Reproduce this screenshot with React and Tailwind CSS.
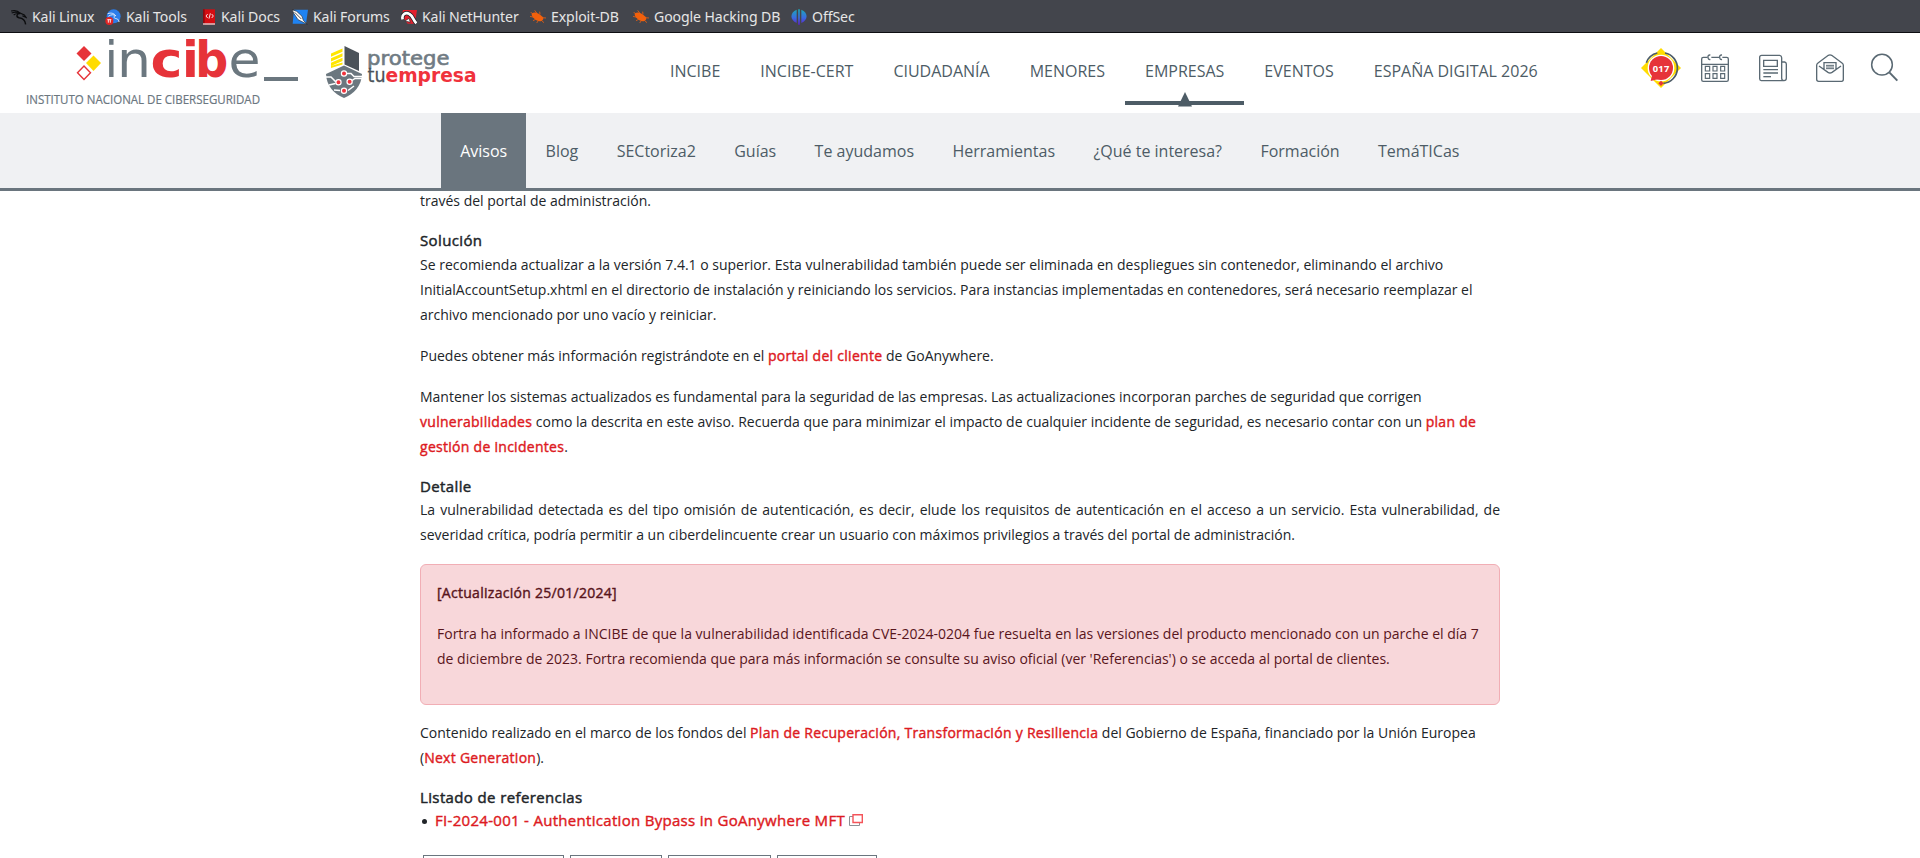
import React from "react";

const DragonIcon = () => (
  <svg width="16" height="16" viewBox="0 0 48 48" fill="none" stroke="#0b0c0e" strokeWidth="3.4">
    <path d="M0 6 C12 3 22 6 28 13 M2 12 C12 8 20 10 26 14 M8 18 C14 13 22 13 28 14" />
    <path d="M26 13 C16 15 15 24 24 26 C34 27 42 30 44 46" strokeWidth="4.4" />
    <path d="M27 12 L40 18 L45 25 L34 20" />
  </svg>
);
const ToolsIcon = () => (
  <svg width="16" height="16" viewBox="0 0 48 48">
    <circle cx="26" cy="22" r="21" fill="#2b7de9" />
    <path d="M8 14 C20 10 28 14 32 20 M10 22 C18 16 26 16 32 20 C24 22 26 28 34 29 C40 30 42 35 42 39" fill="none" stroke="#dcebff" strokeWidth="3" />
    <circle cx="13" cy="36" r="12" fill="#e02424" />
    <path d="M7 32 H19 M10 32 V41 M16 32 V41" stroke="#fff" strokeWidth="2.6" />
  </svg>
);
const DocsIcon = () => (
  <svg width="14" height="16" viewBox="0 0 42 48">
    <path d="M3 1 H39 V47 H3 Z" fill="#d40d12" />
    <path d="M3 1 H8 V47 H3 Z" fill="#8d0a0e" />
    <path d="M3 43 H39 V47 H3 Z" fill="#ddd" />
    <path d="M17 15 L12 21 L17 27 M29 15 L34 21 L29 27 M25 13 L21 29" fill="none" stroke="#fff" strokeWidth="2.6" />
  </svg>
);
const ForumsIcon = () => (
  <svg width="16" height="16" viewBox="0 0 48 48">
    <path d="M6 2 H48 L42 44 H2 Z" fill="#1f83f2" />
    <path d="M0 2 L14 7 L30 22 L34 34 L46 46 L30 38 L18 32 L6 14 Z" fill="#fff" stroke="#22262b" strokeWidth="2" />
    <path d="M8 10 L28 30" stroke="#22262b" strokeWidth="2.4" />
  </svg>
);
const NetHunterIcon = () => (
  <svg width="16" height="16" viewBox="0 0 48 48">
    <path d="M6 3 H48 L42 44 H20 L2 20 Z" fill="#e3202d" />
    <path d="M5 31 C1 17 14 8 25 15 C36 21 36 32 46 43" fill="none" stroke="#22262b" strokeWidth="13" />
    <path d="M5 31 C1 17 14 8 25 15 C36 21 36 32 46 43" fill="none" stroke="#fff" strokeWidth="8" />
    <path d="M12 36 L24 28 L28 40 Z" fill="#fff" stroke="#22262b" strokeWidth="2" />
  </svg>
);
const BugIcon = () => (
  <svg width="16" height="16" viewBox="0 0 48 48">
    <path d="M6 13 C14 7 26 12 34 20 C40 24 42 29 38 33 C32 40 20 36 13 29 C7 24 3 18 6 13 Z" fill="#f2600c" />
    <path d="M0 22 L12 25 M9 35 L17 31 M20 42 L25 35 M14 4 L20 12 M29 8 L30 16 M36 26 L48 27 M34 34 L42 41 M2 9 L8 15" stroke="#f2600c" strokeWidth="2.4" />
  </svg>
);
const OffSecIcon = () => (
  <svg width="16" height="16" viewBox="0 0 48 48">
    <defs>
      <linearGradient id="offsec" x1="0" y1="0" x2="0" y2="1">
        <stop offset="0" stopColor="#1ba8b8" />
        <stop offset="0.55" stopColor="#3a6be0" />
        <stop offset="1" stopColor="#5b22c8" />
      </linearGradient>
    </defs>
    <path d="M17 2 V42 C-4 34 -4 10 17 2 Z M31 2 V42 C52 34 52 10 31 2 Z M21.500 1 H26.500 V47 H21.500 Z" fill="url(#offsec)" />
  </svg>
);

const bookmarks = [
  { label: "Kali Linux", icon: DragonIcon, width: "w-[94px]" },
  { label: "Kali Tools", icon: ToolsIcon, width: "w-[97px]" },
  { label: "Kali Docs", icon: DocsIcon, width: "w-[90px]" },
  { label: "Kali Forums", icon: ForumsIcon, width: "w-[109px]" },
  { label: "Kali NetHunter", icon: NetHunterIcon, width: "w-[129px]" },
  { label: "Exploit-DB", icon: BugIcon, width: "w-[103px]" },
  { label: "Google Hacking DB", icon: BugIcon, width: "w-[158px]" },
  { label: "OffSec", icon: OffSecIcon, width: "w-[80px]" },
];

const mainNav = ["INCIBE", "INCIBE-CERT", "CIUDADANÍA", "MENORES", "EMPRESAS", "EVENTOS", "ESPAÑA DIGITAL 2026"];
const subNav = ["Avisos", "Blog", "SECtoriza2", "Guías", "Te ayudamos", "Herramientas", "¿Qué te interesa?", "Formación", "TemáTICas"];

function BookmarksBar() {
  return (
    <div className="flex h-[33px] shrink-0 items-center border-b border-[#0d0e11] bg-[#43454c] pl-[11px] pt-[2px] font-['Noto_Sans','Open_Sans',sans-serif] text-[14.1px] tracking-[-0.1px] text-[#e6e6e6]">
      {bookmarks.map(({ label, icon: Icon, width }) => (
        <div key={label} className={`flex shrink-0 items-center gap-[5px] whitespace-nowrap ${width}`}>
          <Icon />
          <span className="leading-none">{label}</span>
        </div>
      ))}
    </div>
  );
}

function IncibeLogo() {
  return (
    <svg width="310" height="80" viewBox="0 33 310 80" className="shrink-0">
      <path d="M84 46 L91.500 53.500 L84 61 L76.500 53.500 Z" fill="#e63339" />
      <path d="M93.500 55.500 L101 63 L93.500 71 L86 63 Z" fill="#ffdc00" />
      <path d="M84 66 L90.500 72.700 L84 79.400 L77.500 72.700 Z" fill="#fff" stroke="#e63339" strokeWidth="1.400" />
      <g fontFamily="DejaVu Sans" fontSize="49" fill="#6b777f">
        <text x="104.500" y="77">i</text>
        <text x="117" y="77" textLength="34" lengthAdjust="spacingAndGlyphs">n</text>
        <g fill="#e63339" fontWeight="700">
          <text x="150.500" y="77" textLength="32" lengthAdjust="spacingAndGlyphs">c</text>
          <text x="182" y="77">i</text>
          <text x="195.300" y="77" textLength="33" lengthAdjust="spacingAndGlyphs">b</text>
        </g>
        <text x="228.500" y="77" textLength="32" lengthAdjust="spacingAndGlyphs">e</text>
      </g>
      <path d="M264 77 H298 V81 H264 Z" fill="#6b777f" />
      <text x="26" y="104" fontFamily="Open Sans" fontSize="12.800" fill="#6b777f" stroke="#6b777f" strokeWidth="0.200" textLength="234" lengthAdjust="spacingAndGlyphs">
        INSTITUTO NACIONAL DE CIBERSEGURIDAD
      </text>
    </svg>
  );
}

function ProtegeLogo() {
  return (
    <svg width="190" height="80" viewBox="310 33 190 80" className="shrink-0">
      <path d="M331 53.500 L342.500 48.500 V51.800 L331 56.800 Z M331 58.200 L342.500 53.200 V56.500 L331 61.500 Z M331 62.800 L342.500 57.800 V61 L331 66 Z M331 66 L342.500 62.500 V64.500 L331 68 Z" fill="#ffe600" />
      <path d="M344.500 46 L359 53 V71 L344.500 64.500 Z" fill="#4b5259" />
      <path d="M344 65.500 L362 74 C361.500 86 354 94 344 98 C334 94 326.500 86 326 74 Z" fill="#6b777f" />
      <g stroke="#fff" strokeWidth="1.500" fill="none">
        <path d="M346.500 73.500 H351 L354 76.500 H362 M352 80.500 L355 78.500 H362 M336 82 L331 77 H326 M335.500 83.500 L329 85 M340 90.500 L334 90 M348 90.500 L354 86" />
      </g>
      <g fill="#f0323c" stroke="#fff" strokeWidth="1.200">
        <circle cx="344" cy="73.500" r="2.600" />
        <circle cx="338.500" cy="82.300" r="2.600" />
        <circle cx="349.600" cy="81.700" r="2.600" />
        <circle cx="344" cy="90.700" r="2.600" />
      </g>
      <text x="367" y="64.700" fontFamily="DejaVu Sans" fontSize="20" fill="#707b83" stroke="#707b83" strokeWidth="0.600" textLength="82.500" lengthAdjust="spacingAndGlyphs">protege</text>
      <text x="367.500" y="82.300" fontFamily="DejaVu Sans" fontSize="19.500" fill="#4b5259" stroke="#4b5259" strokeWidth="0.300" textLength="18" lengthAdjust="spacingAndGlyphs">tu</text>
      <text x="385.500" y="82.300" fontFamily="DejaVu Sans" fontWeight="700" fontSize="19" fill="#f0323c" textLength="91" lengthAdjust="spacingAndGlyphs">empresa</text>
    </svg>
  );
}

function HeaderIcons() {
  return (
    <div className="ml-auto mr-5 flex shrink-0 items-center pb-[10px]">
      <svg width="42" height="42" viewBox="60 51 126 126">
        <path d="M123 54 L183 114 L123 174 L63 114 Z" fill="#ffdc00" />
        <path d="M79 98 A46 46 0 0 1 112 69" fill="none" stroke="#4d5c66" strokeWidth="5" />
        <path d="M135 69 A46 46 0 0 1 130 160" fill="none" stroke="#4d5c66" strokeWidth="5" />
        <circle cx="123" cy="114" r="40" fill="#fff" />
        <path d="M92 153 L97 132 L116 147 Z" fill="#e63339" />
        <circle cx="123" cy="114" r="36" fill="#e63339" />
        <path d="M123 152 L131 160 L123 168 L115 160 Z" fill="#e63339" />
        <text x="98" y="125" textLength="50" fontFamily="Open Sans" fontWeight="700" fontSize="28" fill="#fff">017</text>
      </svg>
      <svg width="30" height="30" viewBox="240 69 90 90" className="ml-[18px]" fill="none" stroke="#5a6973" strokeWidth="4">
        <path d="M263 82 H250 Q245 82 245 87 V149 Q245 154 250 154 H320 Q325 154 325 149 V87 Q325 82 320 82 H307 M274 82 H297 M245 103 H325" />
        <path d="M271 75 Q263 74 264 82 Q265 90 271 88 M306 75 Q298 74 299 82 Q300 90 306 88" />
        <path d="M256 109 H269 V123 H256 Z M279 109 H291 V123 H279 Z M302 109 H314 V123 H302 Z M256 131 H269 V145 H256 Z M279 131 H291 V145 H279 Z M302 131 H314 V145 H302 Z" strokeWidth="3.500" />
      </svg>
      <svg width="30" height="30" viewBox="414 69 90 90" className="ml-[28px]" fill="none" stroke="#5a6973" strokeWidth="4">
        <path d="M485 96 H494 Q499 97 499 102 V145 Q499 152 492 152 H424 Q419 151 419 146 V82 Q419 76 425 76 H479 Q485 77 485 83 V145 Q485 152 492 152" />
        <path d="M431 91 H472 V109 H431 Z M430 119 H474 M430 129 H474" />
        <path d="M430 140 H453" />
      </svg>
      <svg width="30" height="30" viewBox="585 69 90 90" className="ml-[27px]" fill="none" stroke="#5a6973" strokeWidth="4">
        <path d="M590 106 V148 Q590 154 596 154 H665 Q670 154 670 148 V106 Q670 102 666 99 L635 76 Q630 73 625 76 L594 99 Q590 102 590 106 Z" />
        <path d="M597 108 L624 127 Q630 131 636 127 L663 108 M612 117 V98 H648 V117" />
        <path d="M618 106 H642 M618 111 H642 M618 116 H642" strokeWidth="3" />
      </svg>
      <svg width="30" height="30" viewBox="750 69 90 90" className="ml-[25px]" fill="none" stroke="#5a6973" strokeWidth="4.500">
        <circle cx="786" cy="104" r="31" />
        <path d="M808 127 L832 152" strokeWidth="6" />
      </svg>
    </div>
  );
}

function Header() {
  return (
    <header className="flex h-20 shrink-0 items-center bg-white">
      <IncibeLogo />
      <ProtegeLogo />
      <nav className="ml-[150px] flex h-full shrink-0">
        {mainNav.map((item) => (
          <a key={item} className="relative flex h-[76px] items-center whitespace-nowrap px-5 text-[16px] text-[#4d5c66]">
            {item}
            {item === "EMPRESAS" && (
              <span className="absolute inset-x-0 top-[59px] flex h-[15px] justify-center">
                <span className="absolute inset-x-0 top-[9px] h-1 bg-[#4d5c66]" />
                <svg width="14" height="15" viewBox="0 0 14 15" className="relative">
                  <path d="M7 0 L14 14.500 H0 Z" fill="#4d5c66" />
                </svg>
              </span>
            )}
          </a>
        ))}
      </nav>
      <HeaderIcons />
    </header>
  );
}

function SubNav() {
  return (
    <nav className="flex h-[78px] shrink-0 border-b-[3px] border-[#6a757e] bg-[#f0f1f3] pl-[441px]">
      {subNav.map((item, i) => (
        <a
          key={item}
          className={`flex items-center whitespace-nowrap px-[19.2px] text-[16px] ${i === 0 ? "bg-[#6a757e] text-white" : "text-[#4d5c66]"}`}
        >
          {item}
        </a>
      ))}
    </nav>
  );
}

const A = ({ children }) => <a className="tracking-[0.02em] text-[#dd1a22] [-webkit-text-stroke:0.4px_#dd1a22]">{children}</a>;
const P = ({ children, className = "" }) => <p className={`mb-4 ${className}`}>{children}</p>;
const H = ({ children }) => (
  <h3 className="text-[15px] leading-[22.5px] tracking-[0.025em] [-webkit-text-stroke:0.45px_#212529]">{children}</h3>
);

function ExternalIcon() {
  return (
    <svg width="14" height="12" viewBox="0 0 14 12" className="ml-1 inline-block align-baseline" fill="none">
      <path d="M4 2.500 H0.500 V11.500 H10.500 V9" stroke="#8c9095" />
      <path d="M4 0.800 H13.300 V8.500 H4 Z" stroke="#f4545a" strokeWidth="1.400" />
    </svg>
  );
}

export default function App() {
  return (
    <div className="flex h-[858px] w-[1920px] flex-col overflow-hidden bg-white font-['Open_Sans',sans-serif]">
      <BookmarksBar />
      <Header />
      <SubNav />
      <main className="ml-[420px] w-[1080px] shrink-0 text-[14px] leading-[25px] text-[#212529]">
        <div className="-mt-[3px]">
          <P>través del portal de administración.</P>
          <H>Solución</H>
          <P>
            Se recomienda actualizar a la versión 7.4.1 o superior. Esta vulnerabilidad también puede ser eliminada en despliegues sin contenedor, eliminando el archivo InitialAccountSetup.xhtml en el directorio de instalación y reiniciando los servicios. Para instancias implementadas en contenedores, será necesario reemplazar el archivo mencionado por uno vacío y reiniciar.
          </P>
          <P>
            Puedes obtener más información registrándote en el <A>portal del cliente</A> de GoAnywhere.
          </P>
          <P>
            Mantener los sistemas actualizados es fundamental para la seguridad de las empresas. Las actualizaciones incorporan parches de seguridad que corrigen <A>vulnerabilidades</A> como la descrita en este aviso. Recuerda que para minimizar el impacto de cualquier incidente de seguridad, es necesario contar con un <A>plan de gestión de incidentes</A>.
          </P>
          <H>Detalle</H>
          <P className="text-justify">
            La vulnerabilidad detectada es del tipo omisión de autenticación, es decir, elude los requisitos de autenticación en el acceso a un servicio. Esta vulnerabilidad, de severidad crítica, podría permitir a un ciberdelincuente crear un usuario con máximos privilegios a través del portal de administración.
          </P>
          <div className="mb-[15px] mt-[17px] rounded-md border border-[#f1aeb5] bg-[#f8d7da] px-4 pb-[17px] pt-[15px] text-[#58151c]">
            <P className="tracking-[0.02em] [-webkit-text-stroke:0.4px_#58151c]">[Actualización 25/01/2024]</P>
            <P>
              Fortra ha informado a INCIBE de que la vulnerabilidad identificada CVE-2024-0204 fue resuelta en las versiones del producto mencionado con un parche el día 7 de diciembre de 2023. Fortra recomienda que para más información se consulte su aviso oficial (ver 'Referencias') o se acceda al portal de clientes.
            </P>
          </div>
          <P>
            Contenido realizado en el marco de los fondos del <A>Plan de Recuperación, Transformación y Resiliencia</A> del Gobierno de España, financiado por la Unión Europea (<A>Next Generation</A>).
          </P>
          <H>Listado de referencias</H>
          <ul className="-mt-[0.5px] flex h-6 items-center text-[15px] leading-6">
            <li className="flex items-center">
              <span className="ml-[2px] mr-[8px] mt-[2px] size-[5px] rounded-full bg-[#212529]" />
              <span className="whitespace-nowrap">
                <A>FI-2024-001 - Authentication Bypass in GoAnywhere MFT</A>
                <ExternalIcon />
              </span>
            </li>
          </ul>
          <div className="ml-[3px] mt-[23px] flex gap-[6px]">
            <span className="h-8 w-[141px] border border-[#6a757e]" />
            <span className="h-8 w-[92px] border border-[#6a757e]" />
            <span className="h-8 w-[103px] border border-[#6a757e]" />
            <span className="h-8 w-[100px] border border-[#6a757e]" />
          </div>
        </div>
      </main>
    </div>
  );
}
